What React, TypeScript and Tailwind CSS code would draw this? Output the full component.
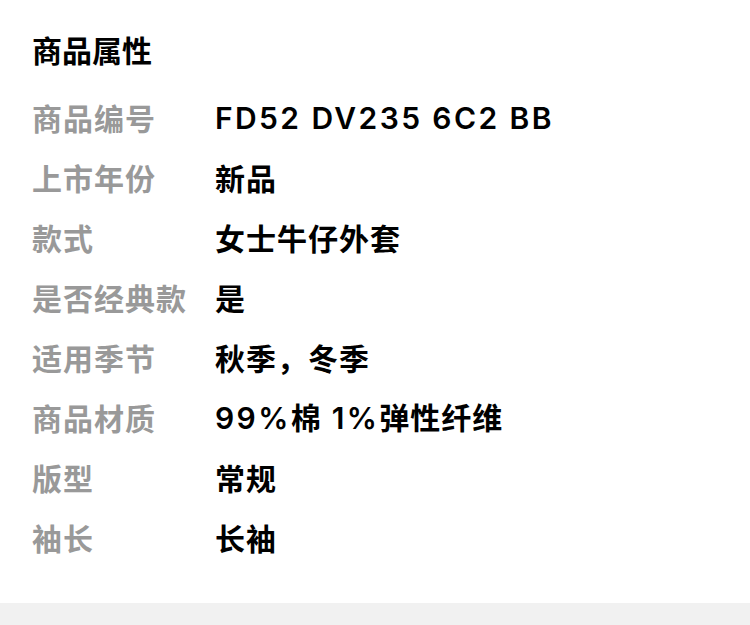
const rows: [string, string][] = [
  ["商品编号", "FD52 DV235 6C2 BB"],
  ["上市年份", "新品"],
  ["款式", "女士牛仔外套"],
  ["是否经典款", "是"],
  ["适用季节", "秋季，冬季"],
  ["商品材质", "99%棉 1%弹性纤维"],
  ["版型", "常规"],
  ["袖长", "长袖"],
];

// latin runs get a lighter weight than the hanzi, like the original
function Value({ text }: { text: string }) {
  const parts = text.split(/([\u4e00-\u9fff\uff0c]+)/).filter(Boolean);
  return (
    <span className="text-black">
      {parts.map((p, i) =>
        /[\u4e00-\u9fff\uff0c]/.test(p) ? (
          <span key={i} className="font-bold tracking-[1px]">
            {p}
          </span>
        ) : (
          <span key={i} className="font-['Inter',sans-serif] font-semibold tracking-[2.4px]">
            {p}
          </span>
        ),
      )}
    </span>
  );
}

export default function App() {
  return (
    <div className="w-[750px] h-[625px] bg-white flex flex-col font-['Noto_Sans_CJK_SC',sans-serif] overflow-hidden">
      <div className="px-[32px] pt-[19px] pb-[36px]">
        <h2 className="h-[60px] leading-[60px] text-[30px] font-bold text-black">商品属性</h2>
        <div className="mt-[8px] flex flex-col">
          {rows.map(([label, value]) => (
            <div key={label} className="h-[60px] flex items-center text-[30px]">
              <span className="w-[183px] shrink-0 text-[#999999] font-semibold tracking-[1px]">{label}</span>
              <Value text={value} />
            </div>
          ))}
        </div>
      </div>
      <div className="flex-1 bg-[#f1f1f1]" />
    </div>
  );
}
